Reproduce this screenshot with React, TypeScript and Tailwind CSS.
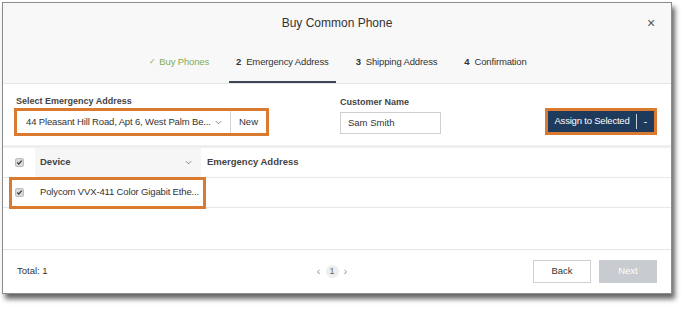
import React from "react";

const ORANGE = "border-[#d97a30]";

const Chevron = ({ className = "" }: { className?: string }) => (
  <svg viewBox="0 0 8 5" className={`w-[7px] h-[5px] ${className}`} fill="none">
    <polyline points="1,1 4,4 7,1" stroke="#777" strokeWidth="1" />
  </svg>
);

const Check = () => (
  <span className="flex items-center justify-center w-[9px] h-[9px] rounded-[2px] bg-[#d9d9d9] border border-[#bdbdbd]">
    <svg viewBox="0 0 8 8" className="w-[7px] h-[7px]" fill="none">
      <polyline points="1.5,4 3.2,5.8 6.5,1.8" stroke="#333" strokeWidth="1.4" />
    </svg>
  </span>
);

const tabs = [
  { n: "", label: "Buy Phones", done: true },
  { n: "2", label: "Emergency Address", active: true },
  { n: "3", label: "Shipping Address" },
  { n: "4", label: "Confirmation" },
];

export default function App() {
  return (
    <div className="w-[687px] h-[309px] bg-white pt-[2px] pl-[2px] font-['Liberation_Sans',Arial,sans-serif] text-[#333]">
      <div className="w-[670px] h-[292px] flex flex-col bg-white border border-[#8c8c8c] shadow-[3px_5px_5px_rgba(0,0,0,0.6)]">
        {/* header */}
        <div className="bg-[#f8f8f8] border-b border-[#e6e6e6]">
          <div className="h-[40px] grid grid-cols-[40px_1fr_40px] items-center">
            <span />
            <span className="text-center text-[12px] text-[#333]">Buy Common Phone</span>
            <span className="text-center text-[14px] text-[#555]">×</span>
          </div>
          <div className="h-[40px] flex justify-center gap-[13px] pl-[2px]">
            {tabs.map((t) => (
              <div
                key={t.label}
                className={`flex items-center px-[7px] text-[9.5px] tracking-[-0.15px] border-b-2 ${
                  t.active ? "border-[#3d4652] text-[#333]" : "border-transparent"
                } ${t.done ? "text-[#7fac5b]" : "text-[#333]"}`}
              >
                {t.done ? (
                  <span className="mr-[3px] text-[8px]">✓</span>
                ) : (
                  <span className="font-bold mr-[5px]">{t.n}</span>
                )}
                {t.label}
              </div>
            ))}
          </div>
        </div>

        {/* form */}
        <div className="h-[64px] flex items-end pl-[11px] pr-[14px] pb-[9px] border-b-[3px] border-[#efefef]">
          <div className="flex flex-col">
            <span className="ml-[2px] mb-[1px] text-[9px] font-bold text-[#444] leading-[12px]">
              Select Emergency Address
            </span>
            <div className={`flex items-center w-[255px] h-[28px] border-[3px] ${ORANGE} bg-white`}>
              <span className="flex-1 pl-[9px] text-[9.5px] tracking-[-0.15px] text-[#333] whitespace-nowrap">
                44 Pleasant Hill Road, Apt 6, West Palm Be...
              </span>
              <Chevron className="mr-[8px]" />
              <span className="h-full border-l border-[#d6d6d6] px-[8px] flex items-center text-[9.5px] text-[#333]">
                New
              </span>
            </div>
          </div>
          <div className="flex flex-col ml-[71px]">
            <span className="mb-[4px] text-[9px] font-bold text-[#444] leading-[12px]">Customer Name</span>
            <div className="w-[101px] h-[22px] mb-[2px] border border-[#cfcfcf] flex items-center pl-[7px] text-[9.5px] text-[#333]">
              Sam Smith
            </div>
          </div>
          <div className="flex-1" />
          <div className={`mb-[1px] border-[3px] ${ORANGE} flex h-[27px] w-[112px] bg-[#1e3a5c]`}>
            <span className="flex-1 flex items-center justify-center text-[9.5px] text-white tracking-[-0.2px]">
              Assign to Selected
            </span>
            <span className="my-[3px] border-l border-[#c9d2dc]" />
            <span className="w-[17px] flex items-center justify-center text-[10px] text-white">-</span>
          </div>
        </div>

        {/* table header */}
        <div className="h-[30px] flex border-b border-[#e8e8e8] text-[9.5px] font-bold text-[#444]">
          <div className="w-[32px] flex items-center justify-center pl-[1px]">
            <Check />
          </div>
          <div className="w-[166px] bg-[#f6f6f6] flex items-center pl-[5px] pr-[9px]">
            <span className="flex-1">Device</span>
            <Chevron />
          </div>
          <div className="flex items-center pl-[6px]">Emergency Address</div>
        </div>

        {/* row */}
        <div className="relative h-[30px] flex border-b border-[#e8e8e8] text-[9.5px] text-[#333]">
          <div className="w-[32px] flex items-center justify-center pl-[1px]">
            <Check />
          </div>
          <div className="flex items-center pl-[5px] whitespace-nowrap tracking-[-0.15px]">
            Polycom VVX-411 Color Gigabit Ethe...
          </div>
          <div className={`absolute left-[6px] -top-[1px] w-[197px] h-[32px] border-[3px] ${ORANGE}`} />
        </div>

        <div className="flex-1" />

        {/* footer */}
        <div className="h-[44px] border-t border-[#e6e6e6] grid grid-cols-[1fr_auto_1fr] items-center px-[14px]">
          <span className="text-[9.5px] text-[#333]">Total: 1</span>
          <div className="flex items-center gap-[5px] mr-[10px] text-[#999]">
            <span className="text-[11px]">‹</span>
            <span className="w-[13px] h-[13px] rounded-full bg-[#eeeeee] flex items-center justify-center text-[9px] text-[#666]">
              1
            </span>
            <span className="text-[11px]">›</span>
          </div>
          <div className="flex justify-end gap-[8px]">
            <span className="w-[58px] h-[23px] border border-[#cfcfcf] flex items-center justify-center text-[9.5px] text-[#333]">
              Back
            </span>
            <span className="w-[58px] h-[23px] bg-[#c8cbcf] flex items-center justify-center text-[9.5px] text-white">
              Next
            </span>
          </div>
        </div>
      </div>
    </div>
  );
}
